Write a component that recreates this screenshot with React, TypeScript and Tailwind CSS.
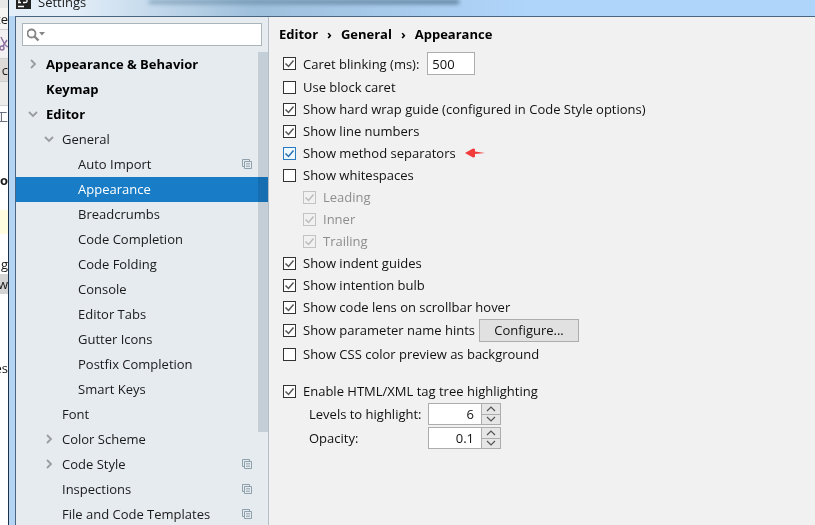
import React, { useState } from "react"

interface TreeItem {
  label: string
  level: 0 | 1 | 2
  state?: "open" | "closed"
  project?: boolean
}

const treeItems: TreeItem[] = [
  { label: "Appearance & Behavior", level: 0, state: "closed" },
  { label: "Keymap", level: 0 },
  { label: "Editor", level: 0, state: "open" },
  { label: "General", level: 1, state: "open" },
  { label: "Auto Import", level: 2, project: true },
  { label: "Appearance", level: 2 },
  { label: "Breadcrumbs", level: 2 },
  { label: "Code Completion", level: 2 },
  { label: "Code Folding", level: 2 },
  { label: "Console", level: 2 },
  { label: "Editor Tabs", level: 2 },
  { label: "Gutter Icons", level: 2 },
  { label: "Postfix Completion", level: 2 },
  { label: "Smart Keys", level: 2 },
  { label: "Font", level: 1 },
  { label: "Color Scheme", level: 1, state: "closed" },
  { label: "Code Style", level: 1, state: "closed", project: true },
  { label: "Inspections", level: 1, project: true },
  { label: "File and Code Templates", level: 1, project: true },
]

const levelPadding = ["pl-3", "pl-7", "pl-11"]

const Chevron: React.FC<{ open: boolean }> = ({ open }) => (
  <svg
    width="10"
    height="10"
    viewBox="0 0 10 10"
    fill="none"
    stroke="#999da1"
    strokeWidth="1.8"
  >
    <path d={open ? "M1 3l4 4 4-4" : "M3 1l4 4-4 4"} />
  </svg>
)

const ProjectIcon = () => (
  <svg
    width="10"
    height="10"
    viewBox="0 0 10 10"
    fill="none"
    stroke="#8da0ab"
    className="absolute right-4 top-[7px]"
  >
    <path d="M2.5 7.5h-2v-7h7v2" />
    <path d="M2.5 2.5h7v7h-7z" />
    <path d="M4 4.5h4M4 6h4M4 7.5h4" strokeWidth="0.7" />
  </svg>
)

interface CheckProps {
  label: string
  checked?: boolean
  disabled?: boolean
  focused?: boolean
}

const Check: React.FC<CheckProps> = ({
  label,
  checked = false,
  disabled = false,
  focused = false,
}) => {
  const [value, setValue] = useState<boolean>(checked)
  const border = disabled
    ? "border-[#c3c3c3]"
    : focused
      ? "border-[#2a7ac0] bg-[#eef8ff]"
      : "border-[#333333] bg-white"

  return (
    <label
      className={`flex items-center gap-[7px] ${disabled ? "text-[#8e8e8e]" : ""}`}
    >
      <span className="relative flex">
        <input
          type="checkbox"
          checked={value}
          disabled={disabled}
          onChange={(e) => setValue(e.target.checked)}
          className={`size-[13px] appearance-none border ${border}`}
        />
        {value && (
          <svg
            width="13"
            height="13"
            viewBox="0 0 13 13"
            fill="none"
            stroke={disabled ? "#bcbcbc" : focused ? "#2a6fb5" : "#555555"}
            strokeWidth="1.5"
            className="pointer-events-none absolute inset-0"
          >
            <path d="M2.5 6.5l3 3 5-6" />
          </svg>
        )}
      </span>
      {label}
    </label>
  )
}

const Spinner: React.FC<{ id: string; initial: number; step: number }> = ({
  id,
  initial,
  step,
}) => {
  const [value, setValue] = useState<number>(initial)
  const change = (delta: number) =>
    setValue((prev) => Math.round((prev + delta) * 10) / 10)

  return (
    <div className="flex h-[22px] w-[73px] border border-[#adadad] bg-white">
      <input
        id={id}
        type="text"
        value={value}
        onChange={(e) => setValue(parseFloat(e.target.value) || 0)}
        className="w-[52px] pr-[7px] text-right outline-none"
      />
      <div className="flex flex-1 flex-col divide-y divide-[#adadad] border-l border-[#adadad] bg-[#e6e6e6]">
        {[1, -1].map((dir) => (
          <button
            key={dir}
            type="button"
            aria-label={dir === 1 ? "Increase" : "Decrease"}
            onClick={() => change(dir * step)}
            className="flex flex-1 items-center justify-center"
          >
            <svg
              width="10"
              height="6"
              viewBox="0 0 10 6"
              fill="none"
              stroke="#555555"
              strokeWidth="1.2"
            >
              <path d={dir === 1 ? "M1 5l4-4 4 4" : "M1 1l4 4 4-4"} />
            </svg>
          </button>
        ))}
      </div>
    </div>
  )
}

// the slice of the IDE window that shows to the left of the dialog
const Backdrop = () => (
  <div className="flex w-2 shrink-0 flex-col items-end overflow-hidden bg-white whitespace-nowrap">
    <div className="h-2 w-full shrink-0 bg-[#e8e8e8]" />
    <div className="flex h-[22px] w-full shrink-0 items-center justify-end border-b border-[#d0d0d0] bg-[#f7f5f4]">
      te
    </div>
    <div className="flex h-7 w-full shrink-0 items-center bg-[#f2f0f1]">
      <svg
        width="8"
        height="16"
        viewBox="0 0 8 16"
        fill="none"
        stroke="#8f6f9f"
        strokeWidth="1.4"
      >
        <path d="M1 1l4 8M7 4L3 10" />
        <circle cx="2" cy="12" r="2" />
        <path d="M5 9l3 2" />
      </svg>
    </div>
    <div className="flex h-6 w-full shrink-0 items-center justify-end border-y border-[#cfcfcf] bg-[#dedbd9]">
      c
    </div>
    <div className="h-6 w-full shrink-0 border-b border-[#d0d0d0] bg-[#efedec]" />
    <div className="flex h-5 shrink-0 items-center text-gray-500">工</div>
    <div className="mt-11 flex h-5 shrink-0 items-center font-bold">o</div>
    <div className="mt-5 h-6 w-full shrink-0 bg-[#fffde0]" />
    <div className="mt-5 flex h-5 shrink-0 items-center">g</div>
    <div className="flex h-5 w-full shrink-0 items-center justify-end bg-[#d4d4d4]">
      w
    </div>
    <div className="mt-16 flex h-5 shrink-0 items-center">es</div>
  </div>
)

const App = () => {
  const [selected, setSelected] = useState<string>("Appearance")

  return (
    <div className="flex h-screen overflow-hidden bg-white font-['Open_Sans','Noto_Sans_CJK_SC',sans-serif] text-[13px] leading-5 text-[#1a1a1a]">
      <Backdrop />

      <div className="flex min-w-0 flex-1 flex-col border-l border-[#1c3146] bg-[#b3d4f2]">
        <header className="flex h-4 shrink-0 items-start gap-[7px] overflow-hidden bg-linear-to-r from-[#e3eef8] from-8% via-[#9fc0dc] via-30% to-[#b0d5fb] to-65% pl-[7px]">
          <svg width="15" height="9" viewBox="0 0 15 9" className="shrink-0">
            <path d="M0 0h15v9H0z" fill="#222222" />
            <path
              d="M3 0v2M2 2.5h3M11 0v1.5q0 1-2 1H7M2 6.5h6"
              stroke="#ffffff"
              strokeWidth="1.3"
              fill="none"
            />
          </svg>
          <span className="-mt-2">Settings</span>
          <div className="ml-14 h-1 w-[310px] bg-linear-to-r from-[#6f93ad] to-[#33536d] opacity-70 blur-[2px]" />
        </header>

        <div className="ml-1.5 flex min-h-0 flex-1 border-t border-l border-[#4a6580]">
          <aside className="flex w-[253px] shrink-0 flex-col border-r border-[#b5bec6] bg-[#e6ebf0]">
            <div className="mx-1.5 mt-1.5 flex h-[23px] shrink-0 items-center border border-[#abb5bc] bg-white pl-1">
              <svg
                width="18"
                height="14"
                viewBox="0 0 18 14"
                fill="none"
                stroke="#868686"
                className="shrink-0"
              >
                <circle cx="4.5" cy="5.5" r="4" strokeWidth="1.8" />
                <path d="M7.5 8.5l4 4" strokeWidth="2.4" />
                <path d="M12 4h6l-3 3.5z" fill="#868686" stroke="none" />
              </svg>
              <input
                type="text"
                aria-label="Search settings"
                className="min-w-0 flex-1 px-1 outline-none"
              />
            </div>

            <div className="relative mt-1.5 min-h-0 flex-1 overflow-hidden">
              <ul>
                {treeItems.map((item) => (
                  <li key={item.label}>
                    <button
                      type="button"
                      onClick={() => setSelected(item.label)}
                      className={`relative flex h-[25px] w-full items-center pb-0.5 whitespace-nowrap ${levelPadding[item.level]} ${
                        item.level === 0 ? "font-bold text-black" : ""
                      } ${selected === item.label ? "bg-[#187dc6] text-white" : ""}`}
                    >
                      <span className="flex w-[18px] shrink-0">
                        {item.state && <Chevron open={item.state === "open"} />}
                      </span>
                      {item.label}
                      {item.project && <ProjectIcon />}
                    </button>
                  </li>
                ))}
              </ul>
              <div className="absolute top-0 right-0 h-[380px] w-2.5 bg-[#003050]/15 mix-blend-multiply" />
            </div>
          </aside>

          <main className="flex min-w-0 flex-1 flex-col bg-[#f1f1f1] pl-3.5 whitespace-nowrap text-[#111111]">
            <nav
              aria-label="Breadcrumb"
              className="-ml-1 flex h-[34px] shrink-0 items-center gap-[9px] font-bold text-black"
            >
              <span>Editor</span>
              <span>›</span>
              <span>General</span>
              <span>›</span>
              <span>Appearance</span>
            </nav>

            <div className="flex h-[25px] shrink-0 items-center gap-2">
              <Check label="Caret blinking (ms):" checked />
              <input
                type="text"
                aria-label="Caret blinking (ms)"
                defaultValue="500"
                className="h-[23px] w-12 border border-[#adadad] bg-white px-1 outline-none"
              />
            </div>

            <div className="grid auto-rows-[22px] justify-items-start">
              <Check label="Use block caret" />
              <Check
                label="Show hard wrap guide (configured in Code Style options)"
                checked
              />
              <Check label="Show line numbers" checked />
              <div className="flex items-center gap-2">
                <Check label="Show method separators" checked focused />
                <svg width="22" height="10" viewBox="0 0 22 10" fill="#f23c3c">
                  <path d="M1 5l8-4.5 2 .5v2.500l10 1.500-10 1v3l-2 .5z" />
                </svg>
              </div>
              <Check label="Show whitespaces" />
              <div className="row-span-3 grid auto-rows-[22px] justify-items-start pl-5">
                <Check label="Leading" checked disabled />
                <Check label="Inner" checked disabled />
                <Check label="Trailing" checked disabled />
              </div>
              <Check label="Show indent guides" checked />
              <Check label="Show intention bulb" checked />
              <Check label="Show code lens on scrollbar hover" checked />
            </div>

            <div className="flex h-6 shrink-0 items-center gap-1">
              <Check label="Show parameter name hints" checked />
              <button
                type="button"
                className="h-[23px] w-[100px] border border-[#adadad] bg-[#e1e1e1]"
              >
                Configure...
              </button>
            </div>
            <div className="flex h-6 shrink-0 items-center">
              <Check label="Show CSS color preview as background" />
            </div>

            <div className="mt-3.5 flex h-[22px] shrink-0 items-center">
              <Check label="Enable HTML/XML tag tree highlighting" checked />
            </div>
            <div className="grid auto-rows-[24px] grid-cols-[119px_auto] items-center justify-start pl-[26px]">
              <label htmlFor="levels">Levels to highlight:</label>
              <Spinner id="levels" initial={6} step={1} />
              <label htmlFor="opacity">Opacity:</label>
              <Spinner id="opacity" initial={0.1} step={0.1} />
            </div>
          </main>
        </div>
      </div>
    </div>
  )
}

export default App
